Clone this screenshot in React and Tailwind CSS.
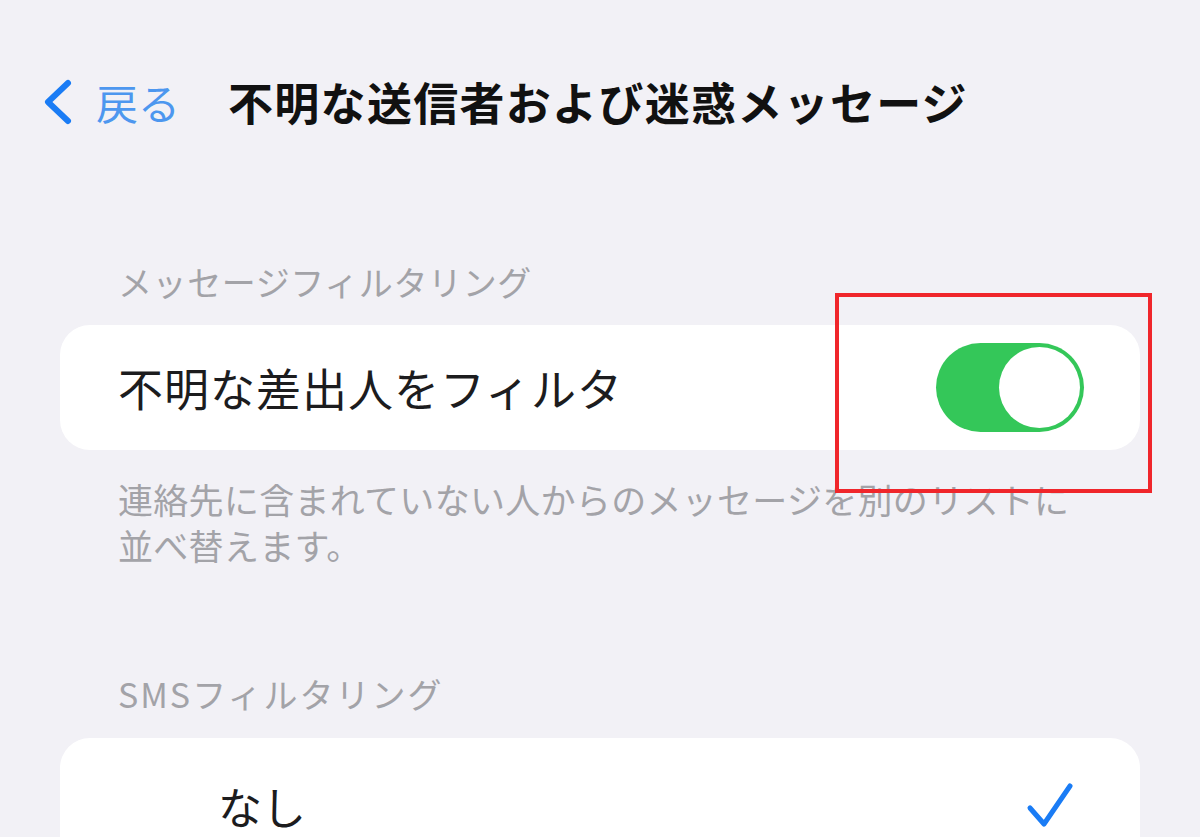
import React from 'react';

const font = { fontFamily: '"Noto Sans CJK JP", "Noto Sans", sans-serif' };

const Toggle = () => (
  <div className="w-[148px] h-[89px] rounded-full bg-[#34c759] flex items-center justify-end p-[4px]">
    <div className="w-[81px] h-[81px] rounded-full bg-white" />
  </div>
);

const App = () => {
  return (
    <div className="relative w-[1200px] h-[837px] overflow-hidden bg-[#f2f1f6]" style={font}>
      {/* nav bar */}
      <div className="flex items-center pt-[74px] pl-[40px]">
        <svg width="34" height="48" viewBox="0 0 34 48" className="mr-[22px]">
          <path d="M28 5 L8 24 L28 43" fill="none" stroke="#1a7cf5" strokeWidth="6" strokeLinecap="round" strokeLinejoin="round" />
        </svg>
        <span className="text-[42px] leading-[56px] text-[#4d97ef] mr-[48px]">戻る</span>
        <span className="text-[45px] leading-[56px] font-bold text-[#111] tracking-[1.3px]">不明な送信者および迷惑メッセージ</span>
      </div>

      {/* message filtering */}
      <div className="mt-[132px] pl-[118px] text-[34px] leading-[40px] text-[#a3a3a8] tracking-[0.6px]">メッセージフィルタリング</div>
      <div className="mt-[23px] mx-[60px] h-[125px] rounded-[30px] bg-white flex items-center justify-between pl-[58px] pr-[56px]">
        <span className="text-[45px] leading-[56px] text-[#1c1c1e] tracking-[1px]">不明な差出人をフィルタ</span>
        <Toggle />
      </div>
      <p className="mt-[26px] pl-[118px] text-[35px] leading-[46px] text-[#a3a3a8] tracking-[0.3px] whitespace-nowrap">
        連絡先に含まれていない人からのメッセージを別のリストに
        <br />
        並べ替えます。
      </p>

      {/* SMS filtering */}
      <div className="mt-[106px] pl-[118px] text-[34px] leading-[40px] text-[#a3a3a8] tracking-[2px]">SMSフィルタリング</div>
      <div className="mt-[24px] mx-[60px] h-[160px] rounded-[30px] bg-white flex items-start justify-between pl-[158px] pr-[66px] pt-[40px]">
        <span className="text-[44px] leading-[56px] text-[#1c1c1e]">なし</span>
        <svg width="48" height="48" viewBox="0 0 48 48" className="mt-[4px]">
          <path d="M4 26 L18 42 L44 4" fill="none" stroke="#1a7cf5" strokeWidth="5" strokeLinecap="round" strokeLinejoin="round" />
        </svg>
      </div>

      {/* annotation */}
      <div className="absolute left-[835px] top-[293px] w-[317px] h-[200px] border-[4px] border-[#f0262b]" />
    </div>
  );
};

export default App;
